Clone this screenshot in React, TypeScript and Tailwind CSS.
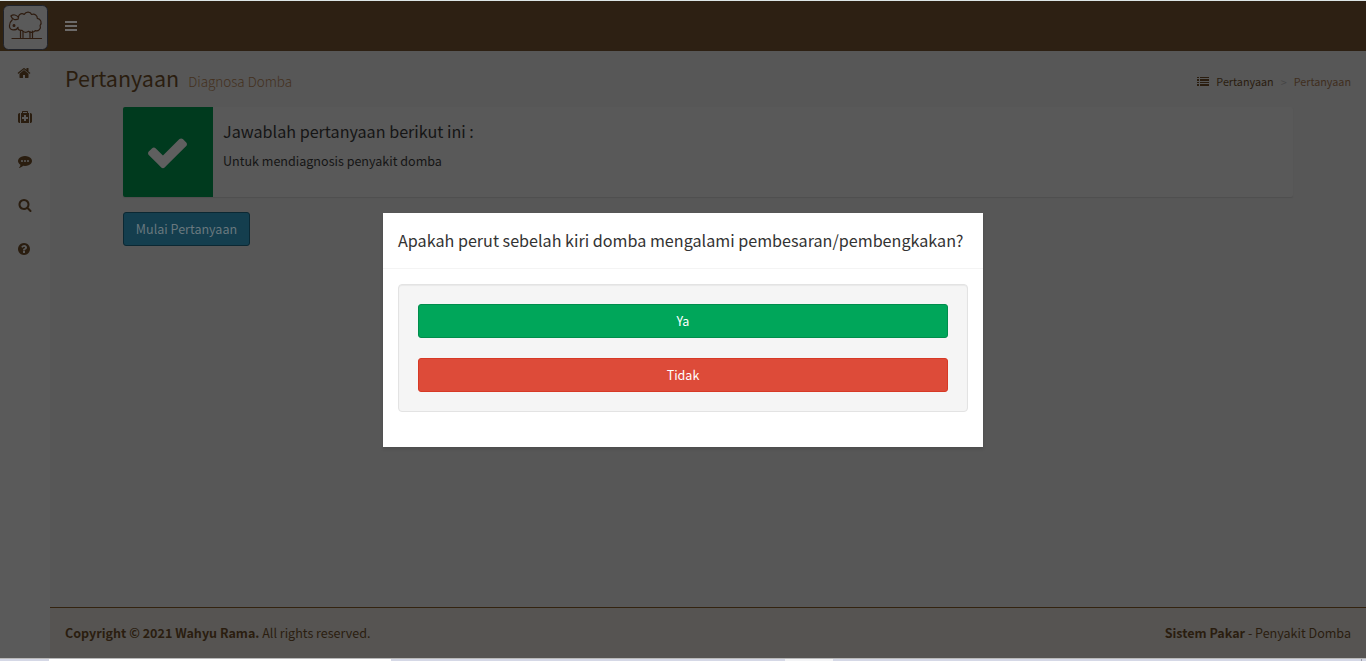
import React from "react";

const ICONS = {
  home: "M1472 992v480q0 26-19 45t-45 19h-384v-384h-256v384h-384q-26 0-45-19t-19-45v-480q0-1 .5-3t.5-3l575-474 575 474q1 2 1 6zm223-69l-62 74q-8 9-21 11h-3q-13 0-21-7l-692-577-692 577q-12 8-24 7-13-2-21-11l-62-74q-8-10-7-23.5t11-21.5l719-599q32-26 76-26t76 26l244 204v-195q0-14 9-23t23-9h192q14 0 23 9t9 23v408l219 182q10 8 11 21.5t-7 23.5z",
  medkit: "M1280 1120v-192q0-14-9-23t-23-9h-224v-224q0-14-9-23t-23-9h-192q-14 0-23 9t-9 23v224h-224q-14 0-23 9t-9 23v192q0 14 9 23t23 9h224v224q0 14 9 23t23 9h192q14 0 23-9t9-23v-224h224q14 0 23-9t9-23zm-640-736h512v-128h-512v128zm-384 0v1280h-32q-92 0-158-66t-66-158v-832q0-92 66-158t158-66h32zm1152 0v1280h-1024v-1280h128v-160q0-40 28-68t68-28h576q40 0 68 28t28 68v160h128zm384 224v832q0 92-66 158t-158 66h-32v-1280h32q92 0 158 66t66 158z",
  comment: "M640 896q0-53-37.5-90.5t-90.5-37.5-90.5 37.5-37.5 90.5 37.5 90.5 90.5 37.5 90.5-37.5 37.5-90.5zm384 0q0-53-37.5-90.5t-90.5-37.5-90.5 37.5-37.5 90.5 37.5 90.5 90.5 37.5 90.5-37.5 37.5-90.5zm384 0q0-53-37.5-90.5t-90.5-37.5-90.5 37.5-37.5 90.5 37.5 90.5 90.5 37.5 90.5-37.5 37.5-90.5zm384 0q0 174-120 321.5t-326 233-450 85.500q-110 0-211-18-173 173-435 229-52 10-86 13-12 1-22-6t-13-18q-4-15 20-37 5-5 23.5-21.5t25.5-23.5 23.5-25.5 24-31.5 20.5-37 20-48 14.5-57.5 12.5-72.5q-146-90-229.5-216.5t-83.5-269.500q0-174 120-321.500t326-233 450-85.500 450 85.500 326 233 120 321.500z",
  search: "M1216 832q0-185-131.5-316.5t-316.5-131.5-316.5 131.5-131.5 316.5 131.5 316.5 316.5 131.5 316.5-131.5 131.5-316.5zm512 832q0 52-38 90t-90 38q-54 0-90-38l-343-342q-179 124-399 124-143 0-273.5-55.5t-225-150-150-225-55.5-273.5 55.5-273.5 150-225 225-150 273.5-55.5 273.5 55.5 225 150 150 225 55.5 273.5q0 220-124 399l343 343q37 37 37 90z",
  question: "M1024 1376v-192q0-14-9-23t-23-9h-192q-14 0-23 9t-9 23v192q0 14 9 23t23 9h192q14 0 23-9t9-23zm256-672q0-88-55.5-163t-138.5-116-170-41q-243 0-371 213-15 24 8 42l132 100q7 6 19 6 16 0 25-12 53-68 86-92 34-24 86-24 48 0 85.5 26t37.5 59q0 38-20 61t-68 45q-63 28-115.5 86.5t-52.5 125.5v36q0 14 9 23t23 9h192q14 0 23-9t9-23q0-19 21.5-49.5t54.5-49.5q32-18 49-28.5t46-35 44.5-48 28-60.5 12.5-81zm384 192q0 209-103 385.5t-279.5 279.5-385.5 103-385.5-103-279.5-279.5-103-385.5 103-385.5 279.5-279.5 385.5-103 385.5 103 279.5 279.5 103 385.5z",
  check: "M1671 566q0 40-28 68l-724 724-136 136q-28 28-68 28t-68-28l-136-136-362-362q-28-28-28-68t28-68l136-136q28-28 68-28t68 28l294 295 656-657q28-28 68-28t68 28l136 136q28 28 28 68z",
};

function Icon({ name, className }: { name: keyof typeof ICONS; className: string }) {
  return (
    <svg viewBox="0 0 1792 1792" fill="currentColor" className={className} aria-hidden="true">
      <path d={ICONS[name]} />
    </svg>
  );
}

function SheepLogo() {
  return (
    <svg viewBox="0 0 45 45" className="h-[45px] w-[45px]" fill="none" stroke="#2e1c10" strokeWidth="1.2" strokeLinecap="round" strokeLinejoin="round" aria-hidden="true">
      <rect x="0.5" y="0.5" width="44" height="44" rx="5" fill="#5a5a5a" stroke="#20232b" strokeWidth="1" />
      <path d="M15.500 11.500c.6-2.800 3.600-3.600 5.700-2.100 1.800-3.100 6.200-2.900 7.400.1 3.200-1 5.900 1 5.700 3.800 3.600.4 4.900 4.700 2.800 7.100 1.300 3.200-1.600 6.100-4.800 5.300-1.600 2.100-5 2.300-6.800.6-2.100 1.700-5.300 1.200-6.500-1-2 .4-3.900-.7-4.500-2.500" />
      <path d="M9.300 14.800c-1.700 1.500-2.700 3.600-2.800 5.900-.4 2.200 1.300 4.100 3.500 4.200 2.500.1 4.300-.9 5-2.500" />
      <path d="M15.500 13.800c-2.700 1.800-6.200.9-7.600-2.800 2.300-2 5.800-1.200 7.600 1.600" />
      <circle cx="11" cy="20.500" r="0.900" fill="#2e1c10" />
      <path d="M17.500 26v6.500M20 26.800v5.700M27 26.800v5.700M29.500 26v6.500" />
      <path d="M9 33.500h29.500" />
    </svg>
  );
}

const MENU: (keyof typeof ICONS)[] = ["home", "medkit", "comment", "search", "question"];
const NUDGE = ["-ml-0.5", "", "", "-ml-px", "-ml-0.5"];

export default function App() {
  return (
    <div className="relative flex h-[661px] w-[1366px] flex-col overflow-hidden bg-[#575757] font-['Noto_Sans_CJK_JP','Noto_Sans',sans-serif] text-[12.55px] leading-5 text-[#2a1d0f]">
      <div className="h-px shrink-0 bg-[#dde5e6]" />
      <header className="flex h-[50px] shrink-0 bg-[#2d2013]">
        <div className="flex w-[50px] bg-[#2f2211] pl-[3px] pt-1">
          <SheepLogo />
        </div>
        <button className="flex w-[42px] items-center justify-center" aria-label="Menu">
          <svg viewBox="0 0 12 10" className="h-2.5 w-3" fill="#6c6a69" shapeRendering="crispEdges">
            <path d="M0 0h12v2H0zM0 4h12v2H0zM0 8h12v2H0z" />
          </svg>
        </button>
      </header>

      <div className="flex min-h-0 flex-1">
        <aside className="flex w-[50px] shrink-0 flex-col bg-[#5a5a5a]">
          {MENU.map((name, i) => (
            <div key={name} className="flex h-11 items-center justify-center">
              <span className={NUDGE[i]}>
                <Icon name={name} className="h-3.5 w-3.5" />
              </span>
            </div>
          ))}
        </aside>

        <div className="flex min-w-0 flex-1 flex-col">
          <div className="flex h-14 shrink-0 justify-between px-[15px]">
            <h1 className="flex items-baseline pt-[13px] text-[21.5px] leading-7">
              Pertanyaan
              <small className="ml-[9px] text-[13.45px] font-light text-[#44301d]">Diagnosa Domba</small>
            </h1>
            <div className="mt-5 flex h-5 items-center text-[10.8px]">
              <svg viewBox="0 0 12 9" className="mr-[7px] h-[9px] w-3" fill="#2a1d0f" shapeRendering="crispEdges">
                <path d="M0 0h2v1H0zM3 0h9v1H3zM0 2h2v2H0zM3 2h9v2H3zM0 5h2v1H0zM3 5h9v1H3zM0 7h2v2H0zM3 7h9v2H3z" />
              </svg>
              <span>Pertanyaan</span>
              <span className="mx-[7px] pt-px text-[10.8px] text-[#454545]">&gt;</span>
              <span className="text-[#3f2e1e]">Pertanyaan</span>
            </div>
          </div>

          <main className="min-h-0 flex-1 pl-[73px]">
            <div className="flex h-[90px] w-[1170px] rounded-[2px] bg-[#595959] shadow-[0_1px_1px_rgba(0,0,0,0.1)]">
              <div className="flex w-[90px] items-center justify-center rounded-l-[2px] bg-[#003a1e]">
                <Icon name="check" className="-ml-px h-[45px] w-[45px] text-[#5f5f5f]" />
              </div>
              <div className="pl-2.5 pt-[13px] text-[#151515]">
                <h4 className="text-[16.15px] leading-[22px]">Jawablah pertanyaan berikut ini :</h4>
                <p className="mt-[9px]">Untuk mendiagnosis penyakit domba</p>
              </div>
            </div>
            <button className="mt-[15px] h-[34px] w-[127px] rounded-[3px] border border-[#0b2833] bg-[#143e4e] text-[#69787e]">
              Mulai Pertanyaan
            </button>
          </main>

          <footer className="flex h-[51px] shrink-0 items-center justify-between border-t border-[#33230f] bg-[#565452] px-[15px]">
            <p>
              <b>Copyright © 2021 Wahyu Rama.</b> All rights reserved.
            </p>
            <p>
              <b>Sistem Pakar</b> - Penyakit Domba
            </p>
          </footer>
        </div>
      </div>

      <div className="flex h-[3px] shrink-0 border-t border-[#b9b9b9] bg-[#d5d8e6]">
        <div className="ml-[49px] w-[342px] bg-white" />
        <div className="ml-[394px] w-12 bg-[#f3f4f6]" />
        <div className="ml-auto mr-1 w-px bg-[#9b9ca6]" />
      </div>

      <div className="absolute inset-x-0 top-[213px] flex justify-center">
        <section role="dialog" className="flex h-[234px] w-[600px] flex-col bg-white text-[#333] shadow-[0_2px_3px_rgba(0,0,0,0.125)]">
          <div className="flex h-14 shrink-0 items-center border-b border-[#f4f4f4] px-[15px] pb-0.5">
            <h4 className="whitespace-nowrap text-[16.15px]">Apakah perut sebelah kiri domba mengalami pembesaran/pembengkakan?</h4>
          </div>
          <div className="p-[15px]">
            <div className="flex h-32 flex-col gap-5 rounded border border-[#e3e3e3] bg-[#f5f5f5] p-[19px] text-white shadow-[inset_0_1px_1px_rgba(0,0,0,0.05)]">
              <button className="h-[34px] shrink-0 rounded-[3px] border border-[#008d4c] bg-[#00a65a]">Ya</button>
              <button className="h-[34px] shrink-0 rounded-[3px] border border-[#d73925] bg-[#dd4b39]">Tidak</button>
            </div>
          </div>
        </section>
      </div>
    </div>
  );
}
